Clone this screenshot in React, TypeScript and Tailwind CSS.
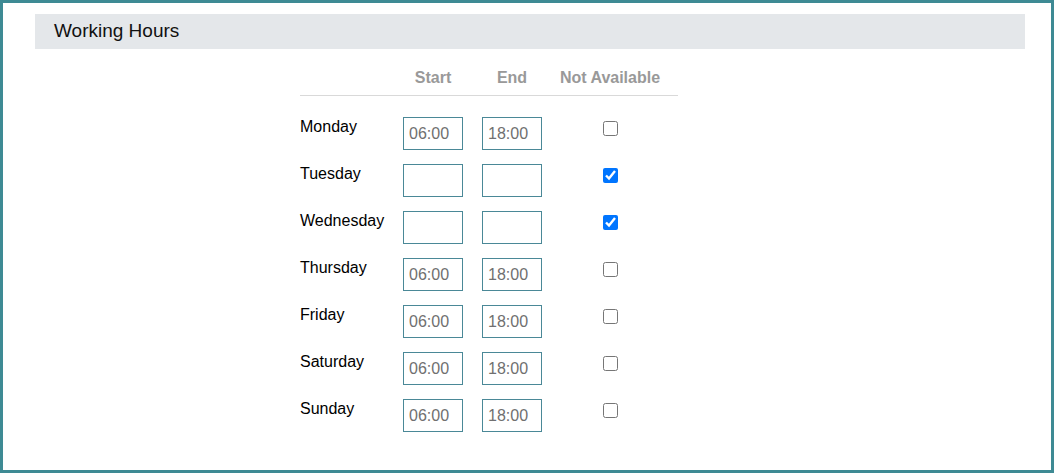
import React from 'react';

type Day = {
  name: string;
  start: string;
  end: string;
  off: boolean;
};

const days: Day[] = [
  { name: 'Monday', start: '06:00', end: '18:00', off: false },
  { name: 'Tuesday', start: '', end: '', off: true },
  { name: 'Wednesday', start: '', end: '', off: true },
  { name: 'Thursday', start: '06:00', end: '18:00', off: false },
  { name: 'Friday', start: '06:00', end: '18:00', off: false },
  { name: 'Saturday', start: '06:00', end: '18:00', off: false },
  { name: 'Sunday', start: '06:00', end: '18:00', off: false },
];

function TimeInput({ value }: { value: string }) {
  return (
    <input
      type="text"
      defaultValue={value}
      className="w-[60px] h-[33px] border border-[#4a8897] bg-white px-[5px] text-[16px] text-[#707070] outline-none"
    />
  );
}

export default function App() {
  return (
    <div
      className="w-[1054px] h-[473px] border-[3px] border-[#3e8a94] bg-white overflow-hidden"
      style={{ fontFamily: '"Liberation Sans", Arial, sans-serif' }}
    >
      {/* Section header */}
      <div className="ml-[32px] mr-[26px] mt-[11px] h-[35px] bg-[#e4e7ea] flex items-center pl-[19px]">
        <h2 className="text-[19px] text-[#111]">Working Hours</h2>
      </div>

      {/* Hours table */}
      <div className="ml-[297px] mt-[20px] w-[378px]">
        <div className="flex border-b border-[#d9d9d9] pb-[8px] text-[16px] leading-[18px] font-bold text-[#999]">
          <div className="w-[103px]" />
          <div className="w-[60px] text-center">Start</div>
          <div className="w-[19px]" />
          <div className="w-[60px] text-center">End</div>
          <div className="w-[136px] text-center">Not Available</div>
        </div>

        <div className="mt-[21px] flex flex-col gap-[14px]">
          {days.map((day) => (
            <div key={day.name} className="flex items-start">
              <div className="w-[103px] pt-px text-[16px] leading-[18px] text-black">{day.name}</div>
              <TimeInput value={day.start} />
              <div className="w-[19px]" />
              <TimeInput value={day.end} />
              <div className="w-[136px] flex justify-center pt-[4px]">
                <input type="checkbox" defaultChecked={day.off} className="m-0 w-[15px] h-[15px]" />
              </div>
            </div>
          ))}
        </div>
      </div>
    </div>
  );
}
